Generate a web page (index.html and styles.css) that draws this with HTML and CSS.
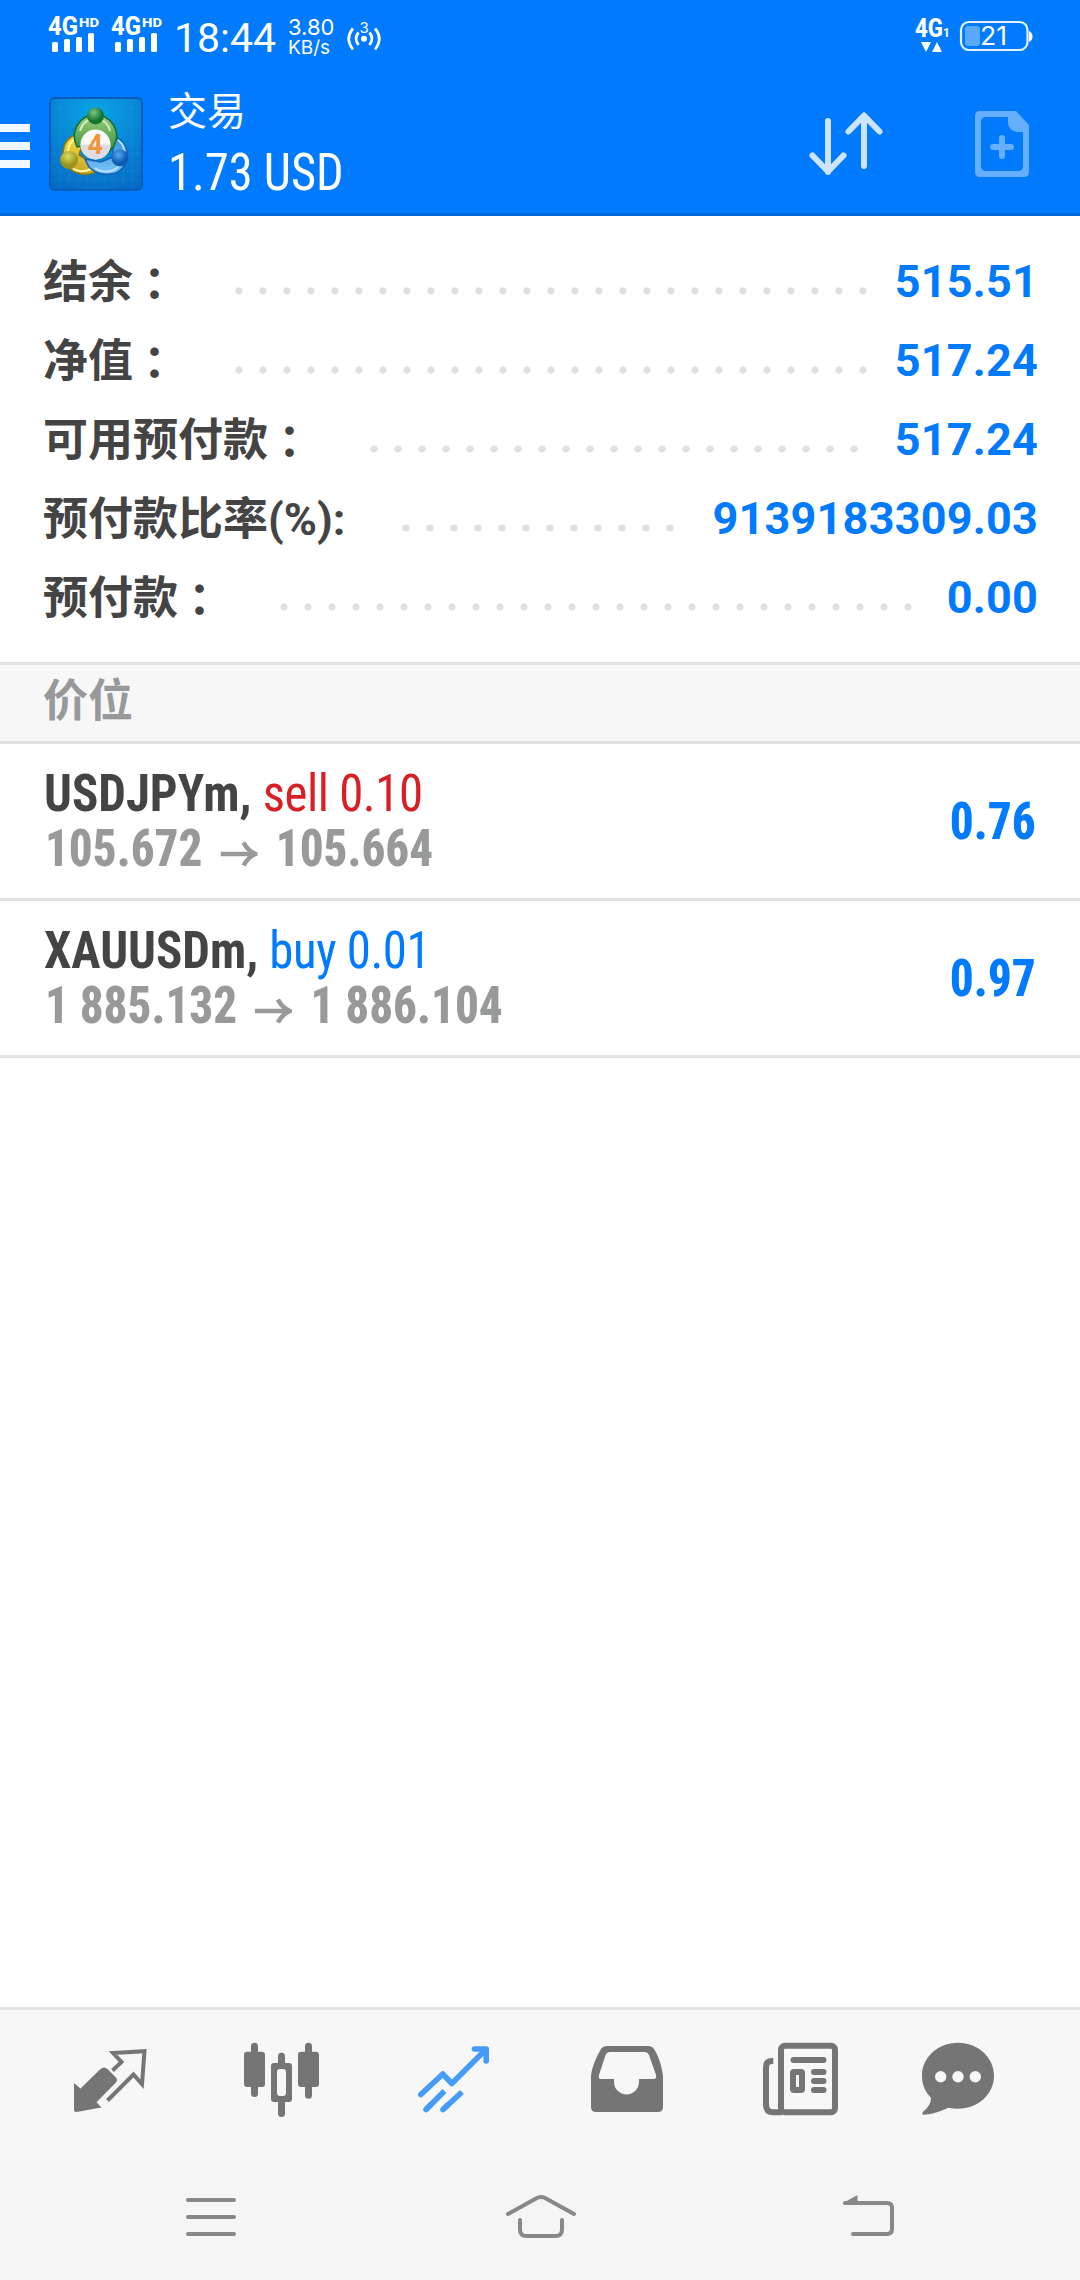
FILE: index.html
```html
<!DOCTYPE html>
<html lang="zh-CN">
<head>
<meta charset="utf-8">
<title>交易</title>
<link rel="stylesheet" href="styles.css">
</head>
<body>
<header class="top">
  <div class="status">
    <svg class="signals" viewBox="40 0 130 72" width="130" height="72">
      <g class="white">
        <text class="net" x="48" y="34.500" textLength="30" lengthAdjust="spacingAndGlyphs">4G</text>
        <text class="hd" x="79" y="26.500" textLength="20" lengthAdjust="spacingAndGlyphs">HD</text>
        <rect x="52" y="42" width="6" height="10" rx="1.500"/><rect x="64" y="39" width="6" height="13" rx="1.500"/>
        <rect x="76" y="37" width="6" height="15" rx="1.500"/><rect x="88" y="33" width="6" height="19" rx="1.500"/>
      </g>
      <g class="white" transform="translate(63 0)">
        <text class="net" x="48" y="34.500" textLength="30" lengthAdjust="spacingAndGlyphs">4G</text>
        <text class="hd" x="79" y="26.500" textLength="20" lengthAdjust="spacingAndGlyphs">HD</text>
        <rect x="52" y="42" width="6" height="10" rx="1.500"/><rect x="64" y="39" width="6" height="13" rx="1.500"/>
        <rect x="76" y="37" width="6" height="15" rx="1.500"/><rect x="88" y="33" width="6" height="19" rx="1.500"/>
      </g>
    </svg>
    <span class="clock">18:44</span>
    <span class="speed"><b>3.80</b><i>KB/s</i></span>
    <svg class="hotspot" viewBox="342 0 44 72" width="44" height="72">
      <circle cx="364" cy="38.700" r="3" fill="#fff"/>
      <g fill="none" stroke="#fff" stroke-width="2.800">
        <path d="M358.500 32.500q-5 6 0 12.500M369.500 32.500q5 6 0 12.500"/>
        <path d="M353 28.500q-8.500 10 0 21M375 28.500q8.500 10 0 21"/>
      </g>
      <text class="count" x="359.500" y="32.500">3</text>
    </svg>
    <svg class="power" viewBox="910 0 130 72" width="130" height="72">
      <g class="white">
        <text class="net" x="915" y="37" textLength="28" lengthAdjust="spacingAndGlyphs">4G</text>
        <text class="sub" x="943" y="37">1</text>
        <path d="M921 42h10l-5 10zM932 52h10l-5-10z"/>
        <path d="M1029 31q3.500 1.500 3.500 5.500t-3.500 5.500z"/>
      </g>
      <rect x="961" y="22" width="66.500" height="28" rx="8" fill="none" stroke="#e6f2ff" stroke-width="2.200"/>
      <rect x="965" y="26" width="15" height="20" rx="3" fill="#59a9ff"/>
      <text class="level" x="980" y="45" textLength="27" lengthAdjust="spacingAndGlyphs">21</text>
    </svg>
  </div>
  <div class="bar">
    <div class="burger"><s></s><s></s><s></s></div>
    <svg class="logo" viewBox="0 0 94 94" width="94" height="94">
      <defs>
        <radialGradient id="sky" cx=".5" cy=".15" r=".95"><stop offset="0" stop-color="#08a4e4"/><stop offset="1" stop-color="#0768c4"/></radialGradient>
        <linearGradient id="grn" x2="0" y2="1"><stop offset="0" stop-color="#9fd07a"/><stop offset="1" stop-color="#2a8a3c"/></linearGradient>
        <linearGradient id="yel" x2="0" y2="1"><stop offset="0" stop-color="#f8e23a"/><stop offset="1" stop-color="#c9a428"/></linearGradient>
        <linearGradient id="blu" x2="0" y2="1"><stop offset="0" stop-color="#2f93e0"/><stop offset="1" stop-color="#7cc4f4"/></linearGradient>
        <radialGradient id="gb" cx=".4" cy=".3"><stop offset="0" stop-color="#7cc98a"/><stop offset="1" stop-color="#14752f"/></radialGradient>
        <radialGradient id="yb" cx=".45" cy=".3"><stop offset="0" stop-color="#e0dc6a"/><stop offset="1" stop-color="#98941c"/></radialGradient>
        <radialGradient id="bb" cx=".4" cy=".3"><stop offset="0" stop-color="#58a8ee"/><stop offset="1" stop-color="#0c5cb4"/></radialGradient>
      </defs>
      <rect x="1" y="1" width="92" height="92" rx="5" fill="url(#sky)" stroke="#0a5cba" stroke-width="2"/>
      <path d="M11 2v90M20 2v90M29 2v90M38 2v90M47 2v90M56 2v90M65 2v90M74 2v90M83 2v90M2 11h90M2 20h90M2 29h90M2 38h90M2 47h90M2 56h90M2 65h90M2 74h90M2 83h90" stroke="#48c0f0" stroke-opacity=".1"/>
      <path d="M37 36C20 36 13 46 14 60c2 9 9 15 18 17 6 1 12 0 16-3l4-4-12-6-10-6z" fill="url(#yel)" stroke="#837614" stroke-width="1.500"/>
      <path d="M19 56c0-8 4-14 12-16M24 72c6 3 12 3 18 0" fill="none" stroke="#fff6a0" stroke-width="2"/>
      <path d="M64 39c9 2 16 12 14 23-2 9-9 15-17 15-8 1-16-2-21-7l-4-8 16 3 12-5z" fill="url(#blu)" stroke="#1262b4" stroke-width="1.500"/>
      <path d="M46 71c8 6 20 4 26-4M69 43c5 4 7 9 6 14" fill="none" stroke="#b8e2fc" stroke-width="2"/>
      <path d="M28 50C20 34 31 18 46 18s27 15 19 31l-7 8-7-18H40l-6 10z" fill="url(#grn)" stroke="#176b35" stroke-width="1.500"/>
      <path d="M31 34c2-7 6-12 15-12s14 6 15 12" fill="none" stroke="#d4edb8" stroke-width="2"/>
      <circle cx="46.500" cy="19" r="8.500" fill="url(#gb)"/><circle cx="20" cy="63" r="9" fill="url(#yb)"/><circle cx="71" cy="61" r="8.500" fill="url(#bb)"/>
      <circle cx="46.500" cy="47.500" r="15" fill="#fbfaf8"/>
      <path d="M31.500 47.500h30a15 15 0 0 1-30 0z" fill="#dedce6"/>
      <text class="four" x="38.500" y="57">4</text>
    </svg>
    <div class="title"><span class="name">交易</span><span class="profit cond">1.73 USD</span></div>
    <svg class="sort" viewBox="800 90 90 100" width="90" height="100" fill="none" stroke="#cce4ff" stroke-width="6" stroke-linecap="round" stroke-linejoin="round">
      <path d="M828 121v51M812.500 155.500l15.500 16 15.500-16M864 166v-50M848.500 131.500l15.500-16 15.500 16"/>
    </svg>
    <svg class="add" viewBox="965 100 75 90" width="75" height="90">
      <path fill="#66afff" fill-rule="evenodd" d="M980 111h36l13 14v47q0 5-5 5h-44q-5 0-5-5v-56q0-5 5-5zM986 117q-5 0-5 5v44q0 5 5 5h32q5 0 5-5v-34h-6q-9-2-9-10v-5z"/>
      <path d="M1002 138v18M993 147h18" stroke="#66afff" stroke-width="6" stroke-linecap="round"/>
    </svg>
  </div>
</header>
<main>
  <section class="summary">
    <div class="line"><span class="label">结余<span lang="zh-Hant">：</span></span><span class="dots d1"></span><span class="value">515.51</span></div>
    <div class="line"><span class="label">净值<span lang="zh-Hant">：</span></span><span class="dots d1"></span><span class="value">517.24</span></div>
    <div class="line"><span class="label">可用预付款<span lang="zh-Hant">：</span></span><span class="dots d3"></span><span class="value">517.24</span></div>
    <div class="line"><span class="label">预付款比率(%):</span><span class="dots d4"></span><span class="value">9139183309.03</span></div>
    <div class="line"><span class="label">预付款<span lang="zh-Hant">：</span></span><span class="dots d5"></span><span class="value">0.00</span></div>
  </section>
  <h2 class="heading">价位</h2>
  <ul class="positions">
    <li>
      <div class="info">
        <div class="row cond"><b>USDJPYm,</b> <span class="sell">sell 0.10</span></div>
        <div class="row cond prices"><span>105.672</span><svg class="to" viewBox="0 0 37 26" preserveAspectRatio="none"><path d="M0 13h33M23 1.500q4 8 12 11.500-8 3.500-12 11.500"/></svg><span>105.664</span></div>
      </div>
      <span class="gain cond">0.76</span>
    </li>
    <li>
      <div class="info">
        <div class="row cond"><b>XAUUSDm,</b> <span class="buy">buy 0.01</span></div>
        <div class="row cond prices"><span>1 885.132</span><svg class="to" viewBox="0 0 37 26" preserveAspectRatio="none"><path d="M0 13h33M23 1.500q4 8 12 11.500-8 3.500-12 11.500"/></svg><span>1 886.104</span></div>
      </div>
      <span class="gain cond">0.97</span>
    </li>
  </ul>
</main>
<nav class="tabs">
  <svg viewBox="24 2010 172 150"><path fill="#757575" d="M74 2083l6.500 5.500 20-19.500q3.500-3 7 0l8 8q3 3 0 6l-19 19.300 5 5.200-25 4.500q-2.500 0-2.500-2.500z"/><path fill="none" stroke="#757575" stroke-width="4" d="M112.500 2070.500l9-8.500-8.500-9 31.500-1.800-2.500 33-8.500-9.700-26 26"/></svg>
  <svg viewBox="196 2010 172 150" fill="#757575"><rect x="244" y="2051.700" width="21" height="35.300" rx="3"/><rect x="251" y="2042.700" width="7" height="54.300" rx="3.500"/><rect x="298" y="2051.700" width="21" height="35.300" rx="3"/><rect x="305" y="2042.700" width="7" height="56" rx="3.500"/><rect x="278" y="2052.700" width="7" height="64.300" rx="3.500"/><rect x="271" y="2063" width="21" height="39" rx="3"/><rect x="277" y="2069" width="9" height="27" rx="3" fill="#f7f7f7"/></svg>
  <svg viewBox="368 2010 172 150" fill="none" stroke="#449cf8" stroke-width="5.600" stroke-linejoin="round"><path stroke-linecap="round" d="M420.800 2094.500l22-20.500 9 9.500 34-34M474.500 2049h11.700v12"/><path d="M426 2109.500l18.500-18.500M443 2109.500l19-17.500"/><path stroke-linecap="round" d="M426 2109.500l5-5M443 2109.500l5-4.600"/></svg>
  <svg viewBox="540 2010 172 150"><path fill="#757575" fill-rule="evenodd" d="M591 2076c1-10 6-20 10-27q2-3 6-3h41q4 0 6 3c4 6 8 17 9 27v31q0 5-5 5h-62q-5 0-5-5zM610 2052q-3 0-4.500 3l-6.500 20q-1 4 1.500 4H614v3a12.500 12.500 0 0 0 25 0v-3h14.500q3.500 0 2.500-4l-7-20q-1.500-3-4.500-3z"/></svg>
  <svg viewBox="712 2010 172 150"><g fill="none" stroke="#757575" stroke-width="6"><rect x="781" y="2045.800" width="54" height="66.500" rx="4"/><path d="M773.300 2061H772q-6 0-6 6v38q0 7 7 7.300h9"/><path stroke-linecap="round" d="M793.500 2060h30M814 2072h9.500M814 2081h9.500M814 2090h9.500"/><rect x="793" y="2072" width="9" height="18" rx="1"/></g></svg>
  <svg viewBox="884 2010 172 150"><path fill="#757575" d="M958 2042.800c20 0 36 14.500 36 33s-16 33-36 33q-5 0-9.500-1-14 6.500-25.500 7-1.500-1 0-3 8-6 8-14c-6-6-9-13-9-22 0-18.500 16-33 36-33z"/><g fill="#f7f7f7"><circle cx="940.700" cy="2076.700" r="5.700"/><circle cx="958" cy="2076.700" r="5.700"/><circle cx="975.300" cy="2076.700" r="5.700"/></g></svg>
</nav>
<nav class="system">
  <svg viewBox="0 2160 360 120"><path d="M188 2200h46M188 2217h46M188 2234h46"/></svg>
  <svg viewBox="360 2160 360 120"><path d="M508 2214l28-15.500q5-3 10 0l28 15.500M520 2220v9.500q0 6.500 6.500 6.500h29q6.500 0 6.500-6.500v-9.500"/></svg>
  <svg viewBox="720 2160 360 120"><path d="M845 2203h42q5 0 5 5v21q0 5-5 5h-34"/><path class="tip" d="M843 2203l14.500-8v9.500h-13.500z"/></svg>
</nav>
</body>
</html>
```
FILE: styles.css
```css
* { box-sizing: border-box; margin: 0; padding: 0; }
body {
  width: 1080px;
  height: 2280px;
  display: flex;
  flex-direction: column;
  background: #fff;
  color: #444;
  font-family: Roboto, "Noto Sans CJK SC", sans-serif;
  overflow: hidden;
}
svg { display: block; flex: none; }
.top { height: 216px; background: #007aff; border-bottom: 3px solid #0068da; color: #fff; }
.status { height: 72px; display: flex; padding-left: 40px; }
.white { fill: #fff; }
.net { font: 800 25px Roboto, sans-serif; }
.hd { font: 800 13px Roboto, sans-serif; }
.clock { width: 112px; padding: 14px 0 0 4px; font: 400 41px/48px Roboto, sans-serif; white-space: nowrap; }
.speed { width: 60px; padding: 17px 0 0 6px; display: flex; flex-direction: column; }
.speed b { font: 400 22px/21px Inter, sans-serif; }
.speed i { font: 400 19px/19px Inter, sans-serif; }
.count { font: 400 15px Inter, sans-serif; fill: #fff; }
.power { margin-left: auto; margin-right: 40px; }
.sub { font: 700 12px Roboto, sans-serif; }
.level { font: 400 25px Inter, sans-serif; fill: #fff; }
.bar { height: 141px; display: flex; }
.burger { width: 49px; padding-top: 52px; display: flex; flex-direction: column; gap: 10px; }
.burger s { width: 30px; height: 8px; background: #f0f8ff; }
.logo { margin-top: 25px; }
.four { font: 700 27px Roboto, sans-serif; fill: #f0953a; }
.title { width: 300px; padding: 14px 0 0 25px; display: flex; flex-direction: column; white-space: nowrap; }
.name { font-size: 39px; line-height: 52px; }
.profit { margin-top: 5px; font-size: 52px; font-weight: 430; line-height: 60px; transform: scaleX(.932); transform-origin: left; }
.cond { font-family: "Roboto Condensed", Roboto, sans-serif; font-stretch: 75%; }
.sort { margin: 18px 0 0 auto; }
.add { margin: 28px 40px 0 75px; }
main { flex: 1; }
.summary { height: 446px; padding: 26px 42px 0 43px; }
.line { height: 79px; display: flex; align-items: center; font-size: 45px; font-weight: 700; line-height: 79px; }
.label { padding-top: 1px; font-family: Roboto, "Noto Sans CJK JP", sans-serif; white-space: nowrap; }
.label span { display: inline-block; font-family: "Noto Sans CJK TC", sans-serif; line-height: 1; transform: translate(-1px, 3px); }
.dots {
  height: 8px;
  margin-top: 18px;
  background: radial-gradient(circle at 4px 4px, #e0e0e0 3.200px, transparent 4px) 0 0 / 24px 8px repeat-x;
}
.d1 { width: 632px; margin-left: 57px; }
.d3 { width: 488px; margin-left: 57px; }
.d4 { width: 272px; margin-left: 57px; }
.d5 { width: 632px; margin-left: 57px; }
.value { margin-left: auto; color: #007aff; letter-spacing: .2px; }
.heading { height: 82px; padding-left: 43px; background: #f7f7f7; border: solid #e2e2e2; border-width: 3px 0; font: 700 45px/66px "Noto Sans CJK SC", sans-serif; color: #98999b; }
.positions { list-style: none; }
.positions li { height: 157px; display: flex; align-items: center; padding: 0 44px; border-bottom: 3px solid #e2e2e2; }
.info { flex: 1; }
.row { height: 55px; font-size: 52px; line-height: 55px; white-space: nowrap; transform: scaleX(.94); transform-origin: left; }
.row b { font-weight: 740; }
.prices { display: flex; align-items: center; gap: 20px; padding-left: 1px; font-weight: 760; color: #98999b; transform: scaleX(.905); }
.to { width: 41px; height: 26px; margin-top: 11px; fill: none; stroke: #98999b; stroke-width: 4.500; }
.sell, .buy { font-weight: 440; letter-spacing: -.5px; }
.sell { color: #d71f26; }
.buy, .gain { color: #007aff; }
.gain { font-size: 52px; font-weight: 760; transform: scaleX(.908); transform-origin: right; }
.tabs { height: 153px; display: flex; padding-left: 24px; background: #f7f7f7; border-top: 3px solid #e3e3e3; }
.tabs svg { width: 172px; height: 150px; }
.system { height: 120px; display: flex; background: #f5f5f5; }
.system svg { width: 360px; height: 120px; fill: none; stroke: #888; stroke-width: 4; stroke-linecap: round; }
.system .tip { fill: #888; stroke: none; }
```
